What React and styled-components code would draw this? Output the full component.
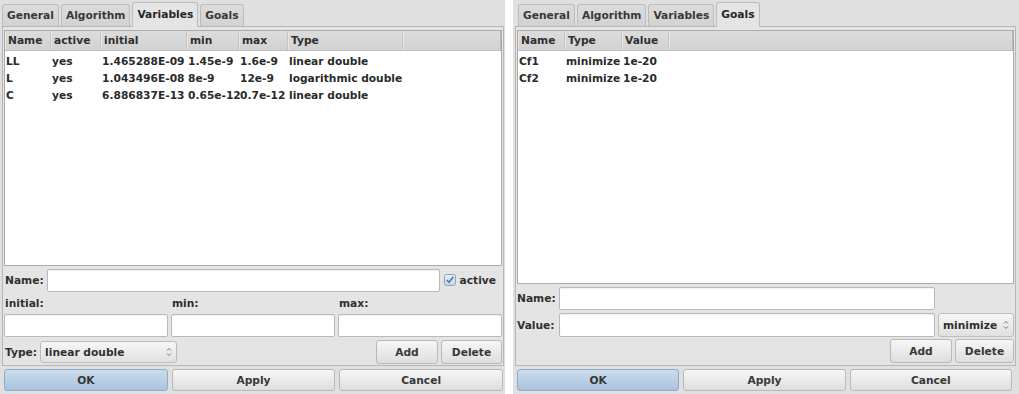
import styled, { createGlobalStyle, css } from 'styled-components';

const GlobalStyle = createGlobalStyle`
  html, body {
    margin: 0;
    padding: 0;
    background: #ffffff;
  }
  * {
    box-sizing: border-box;
  }
  body {
    font-family: 'DejaVu Sans', Verdana, sans-serif;
    font-size: 8pt;
    font-weight: bold;
    color: #2a2a2a;
  }
`;

const Page = styled.div`
  display: flex;
  gap: 8px;
  width: 1019px;
  height: 394px;
`;

const Dialog = styled.div`
  width: ${(p) => p.$width}px;
  height: 394px;
  display: flex;
  flex-direction: column;
  background: #e0e0e0;
  padding: 0 ${(p) => p.$padRight}px 3px 2px;
`;

const TabBar = styled.div`
  height: 26px;
  display: flex;
  align-items: flex-end;
  gap: 2px;
  padding-left: ${(p) => p.$offset}px;
`;

const Tab = styled.div`
  position: relative;
  height: 22px;
  padding: 0 4px;
  display: flex;
  align-items: center;
  border: 1px solid #bcbcbc;
  border-bottom: none;
  border-radius: 3px 3px 0 0;
  background: linear-gradient(#dcdcdc, #d2d2d2);
  color: #383838;
  ${(p) =>
    p.$active &&
    css`
      height: 25px;
      margin-bottom: -1px;
      z-index: 1;
      padding-bottom: 2px;
      background: #e4e4e4;
      color: #262626;
    `}
`;

const Panel = styled.div`
  flex: 1;
  display: flex;
  flex-direction: column;
  border: 1px solid #b6b6b6;
  background: #e4e4e4;
  padding: 3px 1px ${(p) => p.$padBottom}px 1px;
`;

const Table = styled.div`
  flex: 1;
  background: #ffffff;
  border: 1px solid #ababab;
  overflow: hidden;
`;

const HeaderRow = styled.div`
  display: grid;
  grid-template-columns: ${(p) => p.$cols};
  height: 20px;
  background: linear-gradient(#dcdcdc, #d2d2d2);
  border-bottom: 1px solid #bdbdbd;
`;

const HeaderCell = styled.div`
  display: flex;
  align-items: center;
  padding-left: 3px;
  border-right: 1px solid #c4c4c4;
  box-shadow: inset 1px 0 0 #e6e6e6;
  white-space: nowrap;
  color: #303030;
`;

const HeaderFill = styled.div`
  border-right: 1px solid #b8b8b8;
  box-shadow: inset 1px 0 0 #e6e6e6;
`;

const Body = styled.div`
  padding-top: 2px;
`;

const Row = styled.div`
  display: grid;
  grid-template-columns: ${(p) => p.$cols};
  height: 17px;
  align-items: center;
`;

const Cell = styled.div`
  padding-left: 1px;
  white-space: nowrap;
`;

const Label = styled.span`
  white-space: nowrap;
  color: #303030;
  padding-left: ${(p) => p.$pl || 0}px;
`;

const Input = styled.div`
  height: ${(p) => p.$h || 23}px;
  background: #ffffff;
  border: 1px solid #b9b9b9;
  border-radius: 2px;
  box-shadow: inset 0 1px 1px rgba(0, 0, 0, 0.06);
`;

const Button = styled.div`
  height: ${(p) => p.$h || 24}px;
  min-width: ${(p) => p.$w || 0}px;
  display: flex;
  align-items: center;
  justify-content: center;
  border: 1px solid #b8b8b8;
  border-radius: 3px;
  background: linear-gradient(#f6f6f6, #dedede);
  color: #383838;
  ${(p) =>
    p.$primary &&
    css`
      border-color: #91abc6;
      background: linear-gradient(#cbdcec, #a9c4de);
    `}
`;

const Combo = styled.div`
  height: ${(p) => p.$h || 22}px;
  width: ${(p) => p.$w}px;
  display: flex;
  align-items: center;
  justify-content: space-between;
  padding: 0 4px 0 4px;
  border: 1px solid #bcbcbc;
  border-radius: 3px;
  background: linear-gradient(#f6f6f6, #e0e0e0);
  color: #303030;
`;

const DialogButtons = styled.div`
  margin-top: 3px;
  display: grid;
  grid-template-columns: 1fr 1fr 1fr;
  gap: 4px;
  padding: 0 ${(p) => p.$padRight}px 0 2px;
`;

/* left form */
const NameRow = styled.div`
  margin-top: 2px;
  height: 24px;
  display: grid;
  grid-template-columns: 42px 1fr auto;
  align-items: center;
  padding-left: 1px;
`;

const Check = styled.label`
  display: flex;
  align-items: center;
  gap: 4px;
  padding: 0 6px 0 4px;
`;

const TripleGrid = styled.div`
  display: grid;
  grid-template-columns: 1fr 1fr 1fr;
  gap: 3px;
  height: ${(p) => p.$h}px;
  margin-top: ${(p) => p.$mt || 0}px;
  align-items: center;
`;

const ActionRow = styled.div`
  margin-top: ${(p) => p.$mt}px;
  height: 24px;
  display: flex;
  align-items: center;
  gap: 3px;
`;

const Spacer = styled.div`
  flex: 1;
`;

/* right form */
const GoalForm = styled.div`
  display: grid;
  grid-template-columns: 39px 1fr 76px;
  column-gap: 3px;
  margin-top: 3px;
  row-gap: 3px;
  align-items: center;
`;

const GoalButtons = styled.div`
  margin-top: 2px;
  display: flex;
  justify-content: flex-end;
  gap: 3px;
`;

const Spin = () => (
  <svg width="6" height="10" viewBox="0 0 6 10">
    <path d="M1 3.5 L3 1.5 L5 3.5" fill="none" stroke="#777" strokeWidth="1" />
    <path d="M1 6.5 L3 8.5 L5 6.5" fill="none" stroke="#777" strokeWidth="1" />
  </svg>
);

const CheckBox = () => (
  <svg width="12" height="12" viewBox="0 0 12 12">
    <defs>
      <linearGradient id="cbg" x1="0" y1="0" x2="0" y2="1">
        <stop offset="0" stopColor="#e9f0f7" />
        <stop offset="1" stopColor="#c6d6e7" />
      </linearGradient>
    </defs>
    <rect x="0.5" y="0.5" width="11" height="11" rx="2" fill="url(#cbg)" stroke="#8aa3bd" />
    <path d="M2.8 6 L5 8.3 L9.4 2.8" fill="none" stroke="#4d7eb0" strokeWidth="1.7" />
  </svg>
);

const varCols = '46px 50px 86px 52px 49px 115px 1fr';
const varHeaders = ['Name', 'active', 'initial', 'min', 'max', 'Type'];
const variables = [
  ['LL', 'yes', '1.465288E-09', '1.45e-9', '1.6e-9', 'linear double'],
  ['L', 'yes', '1.043496E-08', '8e-9', '12e-9', 'logarithmic double'],
  ['C', 'yes', '6.886837E-13', '0.65e-12', '0.7e-12', 'linear double'],
];

const goalCols = '47px 57px 47px 1fr';
const goalHeaders = ['Name', 'Type', 'Value'];
const goals = [
  ['Cf1', 'minimize', '1e-20'],
  ['Cf2', 'minimize', '1e-20'],
];

const tabs = ['General', 'Algorithm', 'Variables', 'Goals'];

const DataTable = ({ cols, headers, rows }) => (
  <Table>
    <HeaderRow $cols={cols}>
      {headers.map((h) => (
        <HeaderCell key={h}>{h}</HeaderCell>
      ))}
      <HeaderFill />
    </HeaderRow>
    <Body>
      {rows.map((r) => (
        <Row key={r[0]} $cols={cols}>
          {r.map((c, i) => (
            <Cell key={i}>{c}</Cell>
          ))}
        </Row>
      ))}
    </Body>
  </Table>
);

const Tabs = ({ active, offset }) => (
  <TabBar $offset={offset}>
    {tabs.map((t) => (
      <Tab key={t} $active={t === active}>
        {t}
      </Tab>
    ))}
  </TabBar>
);

const VariablesDialog = () => (
  <Dialog $width={505} $padRight={1}>
    <Tabs active="Variables" offset={0} />
    <Panel $padBottom={1}>
      <DataTable cols={varCols} headers={varHeaders} rows={variables} />
      <NameRow>
        <Label>Name:</Label>
        <Input $h={23} />
        <Check>
          <CheckBox />
          <Label>active</Label>
        </Check>
      </NameRow>
      <TripleGrid $h={21} $mt={1}>
        <Label $pl={1}>initial:</Label>
        <Label $pl={1}>min:</Label>
        <Label $pl={1}>max:</Label>
      </TripleGrid>
      <TripleGrid $h={23}>
        <Input />
        <Input />
        <Input />
      </TripleGrid>
      <ActionRow $mt={3}>
        <Label $pl={1}>Type:</Label>
        <Combo $w={137}>
          linear double
          <Spin />
        </Combo>
        <Spacer />
        <Button $w={62}>Add</Button>
        <Button $w={61}>Delete</Button>
      </ActionRow>
    </Panel>
    <DialogButtons $padRight={1}>
      <Button $primary $h={22}>OK</Button>
      <Button $h={22}>Apply</Button>
      <Button $h={22}>Cancel</Button>
    </DialogButtons>
  </Dialog>
);

const GoalsDialog = () => (
  <Dialog $width={506} $padRight={3}>
    <Tabs active="Goals" offset={3} />
    <Panel $padBottom={2}>
      <DataTable cols={goalCols} headers={goalHeaders} rows={goals} />
      <GoalForm>
        <Label>Name:</Label>
        <Input $h={23} />
        <span />
        <Label>Value:</Label>
        <Input $h={24} />
        <Combo $w={76} $h={24}>
          minimize
          <Spin />
        </Combo>
      </GoalForm>
      <GoalButtons>
        <Button $w={62}>Add</Button>
        <Button $w={59}>Delete</Button>
      </GoalButtons>
    </Panel>
    <DialogButtons $padRight={4}>
      <Button $primary $h={22}>OK</Button>
      <Button $h={22}>Apply</Button>
      <Button $h={22}>Cancel</Button>
    </DialogButtons>
  </Dialog>
);

const App = () => (
  <>
    <GlobalStyle />
    <Page>
      <VariablesDialog />
      <GoalsDialog />
    </Page>
  </>
);

export default App;
